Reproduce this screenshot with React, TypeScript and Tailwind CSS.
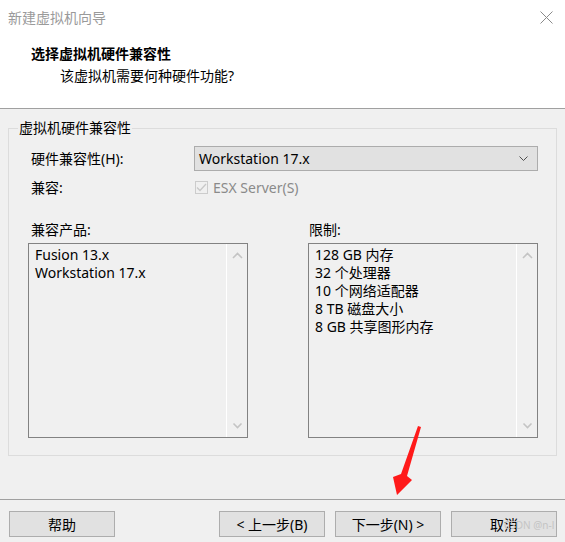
import React from "react";

const font = { fontFamily: '"Noto Sans", "Noto Sans CJK SC", sans-serif' };

function Chevron({ dir, color, thin }: { dir: "up" | "down"; color: string; thin?: boolean }) {
  return (
    <svg width="11" height="7" viewBox="0 0 11 7">
      {dir === "up" ? (
        <path d="M1 6 L5.5 1.5 L10 6" fill="none" stroke={color} strokeWidth={thin ? 1 : 1.6} />
      ) : (
        <path d="M1.5 1.5 L5.5 5.5 L9.5 1.5" fill="none" stroke={color} strokeWidth={thin ? 1 : 1.6} />
      )}
    </svg>
  );
}

function ListBox({ items, width }: { items: string[]; width: string }) {
  return (
    <div className={`${width} h-[195px] border border-[#828282] bg-[#f0f0f0] flex`}>
      <div className="flex-1 pl-[6px] pt-[2px] text-[14px] leading-[18px] text-black">
        {items.map((t) => (
          <div key={t} className="h-[18px] leading-[18px]">{t}</div>
        ))}
      </div>
      <div className="w-[21px] border-l border-l-[#ffffff] flex flex-col items-center justify-between py-[8px]">
        <Chevron dir="up" color="#c4c4c4" />
        <Chevron dir="down" color="#c4c4c4" />
      </div>
    </div>
  );
}

function Btn({ children }: { children: React.ReactNode }) {
  return (
    <div className="w-[106px] h-[26px] border border-[#adadad] bg-[#e1e1e1] flex items-center justify-center text-[14px] text-black">
      {children}
    </div>
  );
}

export default function App() {
  return (
    <div className="relative w-[565px] h-[542px] bg-[#f0f0f0] overflow-hidden text-black" style={font}>
      <div className="h-[108px] bg-white">
        <div className="h-[34px] flex items-center justify-between pl-[8px] pr-[12px]">
          <span className="text-[14px] text-[#9a9a9a]">新建虚拟机向导</span>
          <svg width="13" height="13" viewBox="0 0 13 13">
            <path d="M0.5 0.5 L12.5 12.5 M12.5 0.5 L0.5 12.5" stroke="#8a8a8a" strokeWidth="1" />
          </svg>
        </div>
        <div className="mt-[10px] pl-[31px] text-[14px] leading-[20px] font-bold">选择虚拟机硬件兼容性</div>
        <div className="mt-[2px] pl-[60px] text-[14px] leading-[20px]">该虚拟机需要何种硬件功能?</div>
      </div>
      <div className="h-px bg-[#a0a0a0]" />
      <fieldset className="mt-[9px] mx-[8px] border border-[#dcdcdc] pl-[19px] pr-[18px] pb-[17px]">
        <legend className="ml-[-10px] px-[1px] text-[14px] leading-[20px]">虚拟机硬件兼容性</legend>
        <div className="mt-[8px] flex items-center h-[25px]">
          <div className="w-[166px] pl-[3px] text-[14px]">硬件兼容性(H):</div>
          <div className="w-[344px] h-[25px] border border-[#acacac] bg-[#e1e1e1] flex items-center justify-between pl-[4px] pr-[8px] text-[14px]">
            <span>Workstation 17.x</span>
            <Chevron dir="down" color="#505050" thin />
          </div>
        </div>
        <div className="mt-[6px] flex items-center h-[20px]">
          <div className="w-[167px] pl-[3px] text-[14px]">兼容:</div>
          <div className="w-[13px] h-[13px] border border-[#cccccc] bg-[#f0f0f0] flex items-center justify-center">
            <svg width="11" height="9" viewBox="0 0 11 9">
              <path d="M1 4.5 L4 7.5 L10 1" fill="none" stroke="#c8c8c8" strokeWidth="1.3" />
            </svg>
          </div>
          <span className="ml-[5px] text-[14px] text-[#8a8a8a]">ESX Server(S)</span>
        </div>
        <div className="mt-[23px] flex gap-[60px]">
          <div className="flex flex-col">
            <div className="pl-[3px] text-[14px] leading-[20px] mb-[3px]">兼容产品:</div>
            <ListBox width="w-[220px]" items={["Fusion 13.x", "Workstation 17.x"]} />
          </div>
          <div className="flex flex-col">
            <div className="pl-[1px] text-[14px] leading-[20px] mb-[3px]">限制:</div>
            <ListBox
              width="w-[230px]"
              items={["128 GB 内存", "32 个处理器", "10 个网络适配器", "8 TB 磁盘大小", "8 GB 共享图形内存"]}
            />
          </div>
        </div>
      </fieldset>
      <div className="mt-[43px] h-px bg-[#a0a0a0]" />
      <div className="pt-[11px] pl-[9px] pr-[8px] flex">
        <Btn>帮助</Btn>
        <div className="flex-1" />
        <div className="flex gap-[10px]">
          <Btn>&lt; 上一步(B)</Btn>
          <Btn>下一步(N) &gt;</Btn>
          <Btn>取消</Btn>
        </div>
      </div>
      <div className="absolute left-[504px] top-[519px] text-[10px] text-[#c4c4c4] leading-[12px]">CSDN @n-l</div>
      <svg className="absolute left-0 top-0 pointer-events-none" width="565" height="542" viewBox="0 0 565 542">
        <polygon points="418,426 421,427 407,476 412,480 397,495 393,477 401,474" fill="#ff1a1a" />
      </svg>
    </div>
  );
}
